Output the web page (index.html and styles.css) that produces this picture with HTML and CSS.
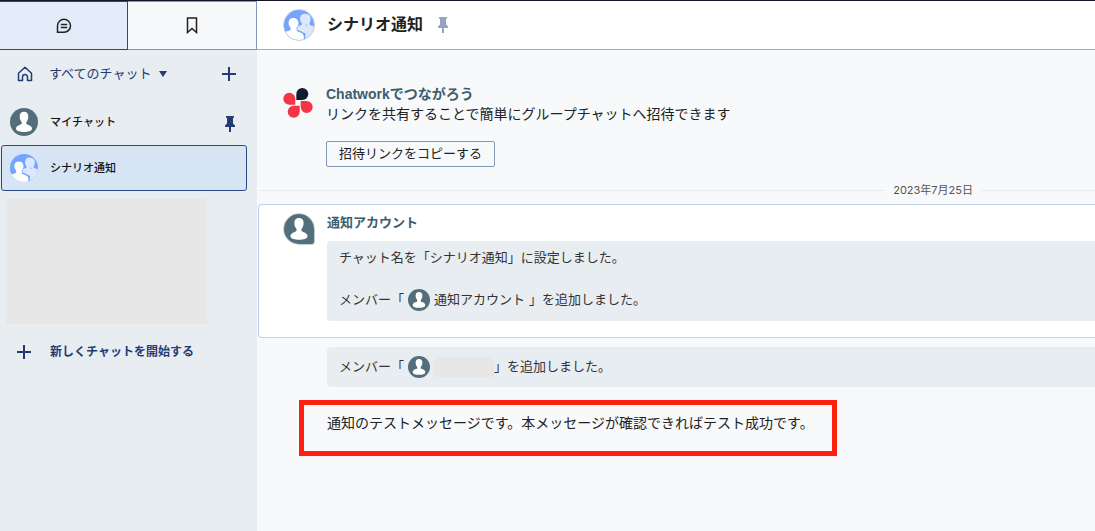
FILE: index.html
```html
<!DOCTYPE html>
<html lang="ja">
<head>
  <meta charset="UTF-8">
  <meta name="viewport" content="width=device-width, initial-scale=1.0">
  <title>シナリオ通知</title>
  <link rel="stylesheet" href="styles.css">
</head>
<body>

  <!-- shared icons -->
  <svg class="sprite" aria-hidden="true">
    <symbol id="person" viewBox="0 0 28 28">
      <rect width="28" height="28" fill="#526f7b"/>
      <path fill="#fff" d="M14 3.800c-2.900 0-4.400 2-4.300 4.900 0 2.300.8 4 2 5.200v1.300c0 .8-.6 1.100-1.700 1.500C7.600 17.600 6 18.600 6 20.700c0 2.300 4 3.300 8 3.300s8-1 8-3.300c0-2.100-1.600-3.100-4-4-1.100-.4-1.700-.7-1.700-1.500v-1.300c1.200-1.200 2-2.900 2-5.200.1-2.900-1.400-4.900-4.300-4.900z"/>
    </symbol>
    <symbol id="group" viewBox="0 0 32 32">
      <rect width="32" height="32" fill="#73a5ff"/>
      <path fill="#dce8fe" d="M22 4c-3.300 0-5 2.400-4.800 5.700.1 2.300.9 3.900 2 5.100-.1 1.300-1.700 1.500-4.200 2.200 0 1.700-.7 2.600-1.400 3.700L23 25l-.5 7H32V17.500c-1.200-.6-4.600-.9-5-2.300-.2-.8.100-1.400.6-2.200.8-1.200.9-2.800.7-4.600C27.900 5.600 25.600 4 22 4z"/>
      <path fill="#fff" d="M10 8.500c-3.300 0-5.200 2.200-5.100 5.300.1 2.300.9 3.900 2.100 5.100v2.300c-.2 1.100-4.500 1.600-7 2.800v8h21.500c.3-2.700 0-5.300-1.500-6.700-1.800-1.600-6.200-1.900-6.600-3.600V19c1.200-1.300 2-2.900 2-5.200 0-3.100-2.100-5.300-5.400-5.300z"/>
      <path fill="none" stroke="#73a5ff" stroke-width="1" d="M14 21.700c3 1.800 5.800 1.700 7 4 .7 1.500.8 3.500.5 6.300M23.500 15.500l1 1.500"/>
    </symbol>
    <symbol id="pin" viewBox="0 0 12 16">
      <path fill="currentColor" d="M2 0h8v1.500L9 2v5.500l2 2V11H7v5H5v-5H1V9.500l2-2V2L2 1.500z"/>
    </symbol>
    <symbol id="plus" viewBox="0 0 14 14">
      <path fill="none" stroke="currentColor" stroke-width="2" d="M7 0v14M0 7h14"/>
    </symbol>
  </svg>

  <div class="app">
    <aside class="sidebar">
      <div class="tabs">
        <button class="tab tab-active" aria-label="チャット">
          <svg width="16" height="16" viewBox="0 0 16 16" fill="none" stroke="currentColor" stroke-width="1.500"><path d="M1.500 14.300V7.800a6.500 6.500 0 1 1 6.500 6.500zM4.800 6.600h6.400M4.800 9.400h6.400"/></svg>
        </button>
        <button class="tab" aria-label="ブックマーク">
          <svg width="12" height="17" viewBox="0 0 12 17" fill="none" stroke="currentColor" stroke-width="1.500"><path d="M1.500 1h9v14.500L6 11.500l-4.500 4z"/></svg>
        </button>
      </div>

      <div class="filter">
        <svg class="home" width="16" height="16" viewBox="0 0 16 16" fill="none" stroke="currentColor" stroke-width="1.500"><path stroke-linejoin="round" d="M1.500 7.300L8 1.300l6.500 6v7.200h-4V11a2.500 2.500 0 0 0-5 0v3.500h-4z"/></svg>
        <button class="filter-name">すべてのチャット<span class="caret"></span></button>
        <button class="icon-button" aria-label="追加"><svg width="14" height="14"><use href="#plus"/></svg></button>
      </div>

      <nav class="rooms">
        <a class="room" href="#">
          <svg class="avatar" width="28" height="28"><use href="#person"/></svg>
          <span class="room-name">マイチャット</span>
          <svg class="room-pin" width="12" height="16"><use href="#pin"/></svg>
        </a>
        <a class="room room-active" href="#">
          <svg class="avatar" width="28" height="28"><use href="#group"/></svg>
          <span class="room-name">シナリオ通知</span>
        </a>
      </nav>

      <div class="hidden-rooms"></div>

      <button class="new-chat">
        <svg width="14" height="14"><use href="#plus"/></svg>
        新しくチャットを開始する
      </button>
    </aside>

    <main class="main">
      <header class="header">
        <svg class="avatar avatar-ring" width="32" height="32"><use href="#group"/></svg>
        <h1>シナリオ通知</h1>
        <svg class="header-pin" width="12" height="16"><use href="#pin"/></svg>
      </header>

      <section class="invite">
        <svg class="logo" width="32" height="32" viewBox="0 0 32 32">
          <path fill="#111d2c" d="M13.300 13V7a6 6 0 1 1 6 6z"/>
          <path fill="#f23645" d="M12.300 17.700h-6a6 6 0 1 1 6-6zM17.700 14h6a6 6 0 1 1-6 6zM16.700 18.700v6a6 6 0 1 1-6-6z"/>
        </svg>
        <div>
          <h2>Chatworkでつながろう</h2>
          <p>リンクを共有することで簡単にグループチャットへ招待できます</p>
          <button class="copy-link">招待リンクをコピーする</button>
        </div>
      </section>

      <div class="date"><span>2023年7月25日</span></div>

      <article class="message">
        <svg class="speaker" width="32" height="32" viewBox="0 0 28 28"><use href="#person"/></svg>
        <div class="message-body">
          <h3>通知アカウント</h3>
          <div class="system">
            <p>チャット名を「シナリオ通知」に設定しました。</p>
            <p class="member">メンバー「<svg class="avatar" width="22" height="22"><use href="#person"/></svg>通知アカウント<span class="member-end">」を追加しました。</span></p>
          </div>
        </div>
      </article>

      <div class="system system-single">
        <p class="member">メンバー「<svg class="avatar" width="22" height="22"><use href="#person"/></svg><span class="hidden-name"></span>」を追加しました。</p>
      </div>

      <p class="highlight">通知のテストメッセージです。本メッセージが確認できればテスト成功です。</p>
    </main>
  </div>

</body>
</html>
```
FILE: styles.css
```css
* {
  box-sizing: border-box;
}

body {
  margin: 0;
  font-family: "Liberation Sans", "Noto Sans CJK JP", sans-serif;
  font-size: 13px;
  line-height: 20px;
  color: #222;
}

h1, h2, h3, p {
  margin: 0;
}

button {
  font: inherit;
  color: inherit;
  background: none;
  border: none;
  padding: 0;
  cursor: pointer;
}

svg {
  display: block;
  flex: none;
}

.sprite {
  position: absolute;
  width: 0;
  height: 0;
}

.app {
  display: grid;
  grid-template-columns: 257px 1fr;
  min-height: 100vh;
  border-top: 1px solid #111827;
}

/* sidebar */
.sidebar {
  background: #e8edf1;
  color: #243c74;
}

.tabs {
  display: grid;
  grid-template-columns: 128px 1fr;
  height: 49px;
}

.tab {
  display: flex;
  align-items: center;
  justify-content: center;
  color: #222;
  background: #f7f9fb;
  border: 1px solid #8097b8;
  border-left: none;
}

.tab-active {
  background: #e2edf9;
  border-color: #294a80;
}

.filter {
  display: flex;
  align-items: center;
  height: 47px;
  margin-bottom: 2px;
  padding: 0 21px 0 17px;
}

.filter-name {
  display: flex;
  align-items: center;
  gap: 8px;
  flex: 1;
  margin-left: 16px;
}

.caret {
  border: 4px solid transparent;
  border-top: 6px solid #243c74;
  border-bottom: none;
}

.room {
  display: flex;
  align-items: center;
  gap: 12px;
  width: 246px;
  height: 46px;
  margin-left: 1px;
  padding: 0 10px 0 8px;
  border: 1px solid transparent;
  border-radius: 3px;
  color: #111;
  font-size: 11px;
  font-weight: 500;
  text-decoration: none;
}

.room-active {
  background: #d7e4f4;
  border-color: #294a80;
}

.room-name {
  flex: 1;
}

.room-pin {
  margin-top: 4px;
  color: #243c74;
}

.avatar {
  border-radius: 50%;
}

.hidden-rooms {
  height: 125px;
  margin: 8px 50px 0 6px;
  background: #e7e7e7;
}

.new-chat {
  display: flex;
  align-items: center;
  gap: 19px;
  margin: 18px 0 0 17px;
  font-size: 12px;
  font-weight: bold;
}

/* chat */
.main {
  min-width: 0;
  background: #f7f9fb;
}

.header {
  display: flex;
  align-items: center;
  height: 49px;
  padding-left: 26px;
  background: #fff;
  border-bottom: 1px solid #9badc6;
}

.avatar-ring {
  border: 1px solid #c8ced8;
}

h1 {
  margin: 0 14px 0 12px;
  font-size: 16px;
}

.header-pin {
  color: #97a4bd;
}

.invite {
  display: flex;
  gap: 11px;
  padding: 34px 0 0 26px;
  font-size: 14px;
}

h2 {
  font-size: 14px;
  color: #3c5d6d;
}

.logo {
  margin-top: 3px;
}

.copy-link {
  height: 26px;
  margin-top: 17px;
  padding: 0 12px;
  font-size: 13px;
  line-height: 18px;
  border: 1px solid #8097b8;
  border-radius: 2px;
}

.date {
  display: flex;
  align-items: center;
  gap: 8px;
  margin: 13px 0 4px 1px;
  font-family: Inter, "Noto Sans CJK JP", sans-serif;
  font-size: 11px;
  color: #555;
}

.date::before,
.date::after {
  content: "";
  height: 1px;
  flex: 1;
  background: #e5ebf1;
}

.date::after {
  flex: 0 0 114px;
}

.message {
  display: flex;
  gap: 12px;
  margin-left: 1px;
  padding: 8px 0 16px 24px;
  background: #fff;
  border: 1px solid #c1d0ea;
  border-right: none;
  border-radius: 4px 0 0 4px;
}

.speaker {
  border-radius: 50% 50% 3px 50%;
  border: 1px solid #c8ced8;
}

.message-body {
  flex: 1;
}

h3 {
  margin-bottom: 8px;
  font-size: 13px;
  color: #3c5d6d;
}

.system {
  padding: 7px 12px;
  background: #e8edf1;
  border-radius: 4px 0 0 4px;
  color: #333;
}

.member {
  display: flex;
  align-items: center;
  gap: 4px;
  height: 22px;
}

.system .member {
  margin: 21px 0 3px;
}

.system-single {
  margin: 9px 0 0 70px;
}

.system-single .member {
  margin: 2px 0;
}

.hidden-name {
  width: 60px;
  height: 20px;
  margin-right: -4px;
  background: #e7e7e7;
}

.highlight {
  width: fit-content;
  margin: 13px 0 0 42px;
  padding: 8px 18px 18px 23px;
  border: 5px solid #ff2010;
  font-size: 14px;
}
```
